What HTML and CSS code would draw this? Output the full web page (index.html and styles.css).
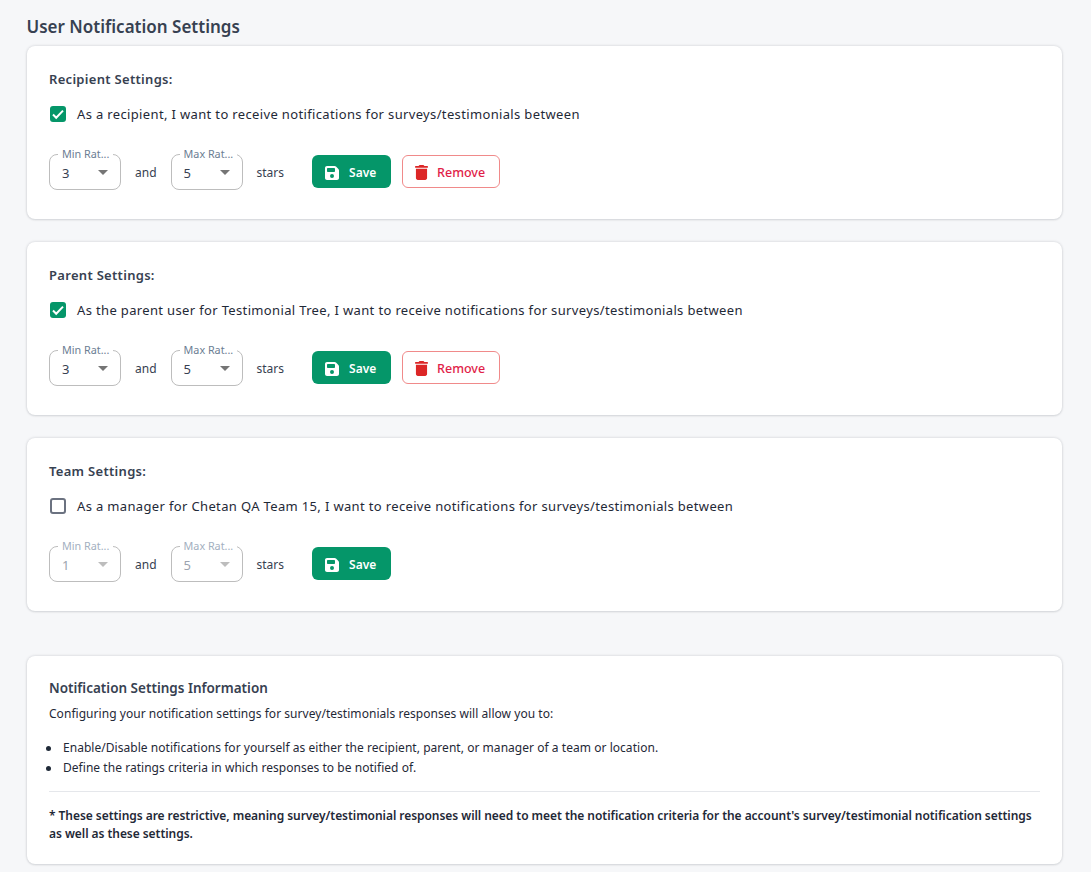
FILE: index.html
```html
<!DOCTYPE html>
<html lang="en">
<head>
<meta charset="utf-8">
<title>User Notification Settings</title>
<link rel="stylesheet" href="styles.css">
</head>
<body>
<svg class="defs" width="0" height="0" aria-hidden="true">
  <symbol id="i-save" viewBox="0 0 448 512"><path fill="currentColor" d="M64 32C28.700 32 0 60.700 0 96v320c0 35.300 28.700 64 64 64h320c35.300 0 64-28.700 64-64V173.300c0-17-6.700-33.300-18.700-45.300L352 50.700C340 38.700 323.700 32 306.700 32H64zm0 96c0-17.700 14.300-32 32-32h192c17.700 0 32 14.300 32 32v64c0 17.700-14.300 32-32 32H96c-17.700 0-32-14.300-32-32v-64zm160 160a64 64 0 1 1 0 128 64 64 0 1 1 0-128z"/></symbol>
  <symbol id="i-trash" viewBox="0 0 448 512"><path fill="currentColor" d="M135.200 17.700C140.600 6.800 151.700 0 163.800 0h120.400c12.100 0 23.200 6.800 28.600 17.700L320 32h96c17.700 0 32 14.300 32 32s-14.300 32-32 32H32C14.300 96 0 81.700 0 64s14.300-32 32-32h96l7.200-14.300zM32 128h384v320c0 35.300-28.700 64-64 64H96c-35.300 0-64-28.700-64-64V128z"/></symbol>
</svg>
<main class="page">
  <h1 class="title">User Notification Settings</h1>

  <section class="card">
    <h2 class="heading">Recipient Settings:</h2>
    <label class="check-row">
      <span class="box box-on"><svg viewBox="0 0 16 16" width="16" height="16"><path d="M3 8.500l3.200 3.200L13 4.600" fill="none" stroke="#fff" stroke-width="2"/></svg></span>
      <span>As a recipient, I want to receive notifications for surveys/testimonials between</span>
    </label>
    <div class="controls">
      <div class="select"><span class="select-label">Min Rat...</span><span class="select-value">3</span><span class="caret"></span></div>
      <span class="word">and</span>
      <div class="select"><span class="select-label">Max Rat...</span><span class="select-value">5</span><span class="caret"></span></div>
      <span class="word">stars</span>
      <button class="btn btn-save"><svg class="icon-save" width="14" height="16"><use href="#i-save"/></svg>Save</button>
      <button class="btn btn-remove"><svg class="icon-trash" width="13" height="15"><use href="#i-trash"/></svg>Remove</button>
    </div>
  </section>

  <section class="card">
    <h2 class="heading">Parent Settings:</h2>
    <label class="check-row">
      <span class="box box-on"><svg viewBox="0 0 16 16" width="16" height="16"><path d="M3 8.500l3.200 3.200L13 4.600" fill="none" stroke="#fff" stroke-width="2"/></svg></span>
      <span>As the parent user for Testimonial Tree, I want to receive notifications for surveys/testimonials between</span>
    </label>
    <div class="controls">
      <div class="select"><span class="select-label">Min Rat...</span><span class="select-value">3</span><span class="caret"></span></div>
      <span class="word">and</span>
      <div class="select"><span class="select-label">Max Rat...</span><span class="select-value">5</span><span class="caret"></span></div>
      <span class="word">stars</span>
      <button class="btn btn-save"><svg class="icon-save" width="14" height="16"><use href="#i-save"/></svg>Save</button>
      <button class="btn btn-remove"><svg class="icon-trash" width="13" height="15"><use href="#i-trash"/></svg>Remove</button>
    </div>
  </section>

  <section class="card">
    <h2 class="heading">Team Settings:</h2>
    <label class="check-row">
      <span class="box"></span>
      <span>As a manager for Chetan QA Team 15, I want to receive notifications for surveys/testimonials between</span>
    </label>
    <div class="controls">
      <div class="select select-off"><span class="select-label">Min Rat...</span><span class="select-value">1</span><span class="caret"></span></div>
      <span class="word">and</span>
      <div class="select select-off"><span class="select-label">Max Rat...</span><span class="select-value">5</span><span class="caret"></span></div>
      <span class="word">stars</span>
      <button class="btn btn-save"><svg class="icon-save" width="14" height="16"><use href="#i-save"/></svg>Save</button>
    </div>
  </section>

  <section class="card info">
    <h2 class="info-heading">Notification Settings Information</h2>
    <p class="info-text">Configuring your notification settings for survey/testimonials responses will allow you to:</p>
    <ul class="info-list">
      <li>Enable/Disable notifications for yourself as either the recipient, parent, or manager of a team or location.</li>
      <li>Define the ratings criteria in which responses to be notified of.</li>
    </ul>
    <hr class="rule">
    <p class="note">* These settings are restrictive, meaning survey/testimonial responses will need to meet the notification criteria for the account's survey/testimonial notification settings as well as these settings.</p>
  </section>
</main>
</body>
</html>
```

FILE: styles.css
```css
* { box-sizing: border-box; }
html, body { margin: 0; padding: 0; }
body {
  background: #f6f7f9;
  color: #1f2937;
  font-family: "Noto Sans", "Open Sans", sans-serif;
  font-size: 13px;
  height: 872px;
  overflow: hidden;
}
.defs { position: absolute; }
.page { padding: 14px 29px 0 26.500px; }
.title {
  margin: 0 0 6px;
  font-size: 17px;
  line-height: 26px;
  font-weight: 600;
  color: #374151;
}
.card {
  background: #fff;
  border-radius: 8px;
  box-shadow: 0 0 3px rgba(17, 24, 39, 0.18), 0 1px 2px rgba(17, 24, 39, 0.08);
  padding: 22px 22px 29px 22.500px;
  margin-bottom: 23px;
  height: 173px;
}
.heading {
  margin: 0;
  font-size: 13px;
  line-height: 22px;
  font-weight: 600;
  letter-spacing: 0.3px;
  color: #374151;
}
.check-row {
  display: flex;
  align-items: center;
  gap: 11px;
  margin-top: 12px;
  height: 24px;
  letter-spacing: 0.35px;
}
.box {
  width: 16.500px;
  height: 16.500px;
  margin-left: 0.500px;
  border: 2px solid #6b7280;
  border-radius: 3px;
  flex: none;
  display: flex;
  align-items: center;
  justify-content: center;
}
.box-on { background: #059669; border: 0; }
.controls {
  display: flex;
  align-items: center;
  margin-top: 28px;
  height: 36px;
}
.select {
  position: relative;
  width: 72px;
  height: 36px;
  border: 1px solid #bdbdbd;
  border-radius: 8px;
  display: flex;
  align-items: center;
  padding: 1px 0 0 12px;
  color: #374151;
  font-size: 13px;
}
.select-label {
  position: absolute;
  top: -8px;
  left: 8px;
  padding: 0 4px;
  background: #fff;
  font-size: 10.800px;
  line-height: 14px;
  color: #6b7d93;
  white-space: nowrap;
}
.caret {
  position: absolute;
  right: 12px;
  top: 15px;
  border-left: 5px solid transparent;
  border-right: 5px solid transparent;
  border-top: 5px solid #757575;
}
.select-off { color: #9ca3af; }
.select-off .select-label { color: #a3afc0; }
.select-off .caret { border-top-color: #bdbdbd; }
.word { margin: 0 14px; font-size: 12px; color: #374151; }
.btn {
  display: inline-flex;
  align-items: center;
  height: 33px;
  margin-bottom: 1px;
  border-radius: 6px;
  font: 600 12px/14px "Noto Sans", "Open Sans", sans-serif;
  padding: 2px 0 0;
  cursor: pointer;
}
.icon-save, .icon-trash { flex: none; }
.btn-save {
  width: 79px;
  margin-left: 14px;
  padding-left: 13px;
  gap: 10px;
  background: #059669;
  color: #fff;
  border: 0;
}
.btn-remove {
  width: 98px;
  margin-left: 11px;
  padding-left: 12px;
  gap: 9px;
  background: #fff;
  color: #e11d48;
  border: 1px solid #f08a8a;
  font-size: 12.500px;
  font-weight: 500;
}
.icon-trash { color: #dc2626; }
.info { height: 208px; margin: 45px 0 0; padding: 22px 22px 0 22.500px; }
.info-heading {
  margin: 0;
  font-size: 13.500px;
  line-height: 20px;
  font-weight: 600;
  color: #374151;
}
.info-text { margin: 8px 0 0; font-size: 12px; line-height: 16px; letter-spacing: 0.04px; }
.info-list { margin: 16px 0 0; padding: 0; list-style: none; font-size: 12px; line-height: 20px; letter-spacing: 0.04px; }
.info-list li { display: flex; align-items: center; gap: 12px; margin-left: -3px; }
.info-list li::before { content: ""; flex: none; width: 5px; height: 5px; border-radius: 50%; background: #1f2937; }
.rule { margin: 13px 0 0; border: 0; border-top: 1px solid #e5e7eb; }
.note { margin: 15px 0 0; font-size: 12px; line-height: 18px; font-weight: 600; letter-spacing: -0.05px; }
```
